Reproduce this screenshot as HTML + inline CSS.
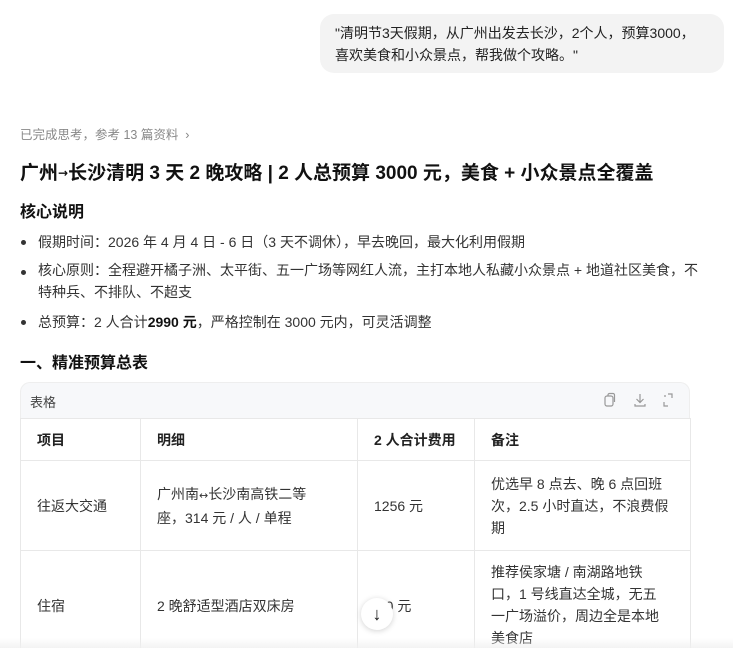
<!DOCTYPE html>
<html><head><meta charset="utf-8"><style>
*{margin:0;padding:0;box-sizing:border-box}
html,body{width:733px;height:648px;overflow:hidden}
body{background:#fff;font-family:"Liberation Sans","Noto Sans CJK SC",sans-serif;color:#1f1f1f;position:relative}
.a{position:absolute;white-space:nowrap}
.bubble{left:320px;top:14px;width:404px;height:59px;background:#f3f3f3;border-radius:14px;padding:8px 15px;font-size:14px;line-height:22px;color:#222}
.li{font-size:14px;color:#333;line-height:22px}
.dot{position:absolute;left:21px;width:5px;height:5px;border-radius:50%;background:#333}
table{position:absolute;left:20px;top:418px;width:670px;border-collapse:collapse;font-size:14px;color:#333;table-layout:fixed}
td{border:1px solid #e8e8e8;padding:0 16px;line-height:22px;vertical-align:middle;white-space:nowrap}
tr.h td{font-weight:bold;color:#222;height:42px}
</style></head><body>
<div class="a bubble">"清明节3天假期，从广州出发去长沙，2个人，预算3000，<br>喜欢美食和小众景点，帮我做个攻略。"</div>
<div class="a" style="left:20px;top:124px;font-size:12.5px;color:#888">已完成思考，参考 13 篇资料 &nbsp;›</div>
<div class="a" style="left:20px;top:158px;font-size:19px;font-weight:bold;color:#111">广州<span style="font-family:'DejaVu Sans';font-size:12px;vertical-align:2px">→</span>长沙清明 3 天 2 晚攻略 | 2 人总预算 3000 元，美食 + 小众景点全覆盖</div>
<div class="a" style="left:20px;top:198px;font-size:16px;font-weight:bold;color:#111">核心说明</div>
<div class="dot" style="top:240px"></div>
<div class="a li" style="left:38px;top:231px">假期时间：2026 年 4 月 4 日 - 6 日（3 天不调休），早去晚回，最大化利用假期</div>
<div class="dot" style="top:270px"></div>
<div class="a li" style="left:38px;top:259px">核心原则：全程避开橘子洲、太平街、五一广场等网红人流，主打本地人私藏小众景点 + 地道社区美食，不<br>特种兵、不排队、不超支</div>
<div class="dot" style="top:320px"></div>
<div class="a li" style="left:38px;top:311px">总预算：2 人合计<b style="color:#111">2990 元</b>，严格控制在 3000 元内，可灵活调整</div>
<div class="a" style="left:20px;top:349px;font-size:16px;font-weight:bold;color:#111">一、精准预算总表</div>
<div class="a" style="left:20px;top:382px;width:670px;height:37px;background:#f7f8fa;border-radius:10px 10px 0 0;border:1px solid #eee;border-bottom:none"></div>
<div class="a" style="left:30px;top:392px;font-size:13px;color:#444">表格</div>
<svg class="a" style="left:602px;top:392px" width="80" height="16" viewBox="0 0 80 16" fill="none" stroke="#999" stroke-width="1.2">
<rect x="3" y="4" width="8" height="10" rx="2"/><path d="M6 4V3a1.5 1.5 0 0 1 1.5-1.5H11a1.5 1.5 0 0 1 1.5 1.5v7"/>
<path d="M38 2v8M34.5 7l3.5 3.5L41.5 7M33 12v2h10v-2"/>
<path d="M62 4h2M66 2h4v4M66 14h-4v-4"/>
</svg>
<table>
<colgroup><col style="width:120px"><col style="width:217px"><col style="width:117px"><col style="width:216px"></colgroup>
<tr class="h"><td>项目</td><td>明细</td><td>2 人合计费用</td><td>备注</td></tr>
<tr style="height:90px"><td>往返大交通</td><td>广州南<span style="font-family:'DejaVu Sans';font-size:11px">↔</span>长沙南高铁二等<br>座，314 元 / 人 / 单程</td><td>1256 元</td><td>优选早 8 点去、晚 6 点回班<br>次，2.5 小时直达，不浪费假<br>期</td></tr>
<tr style="height:110px"><td>住宿</td><td>2 晚舒适型酒店双床房</td><td>&nbsp;&nbsp;&nbsp;0 元</td><td style="vertical-align:top;padding-top:10px">推荐侯家塘 / 南湖路地铁<br>口，1 号线直达全城，无五<br>一广场溢价，周边全是本地<br>美食店</td></tr>
</table>
<div class="a" style="left:361px;top:598px;width:32px;height:32px;border-radius:50%;background:#fff;box-shadow:0 1px 6px rgba(0,0,0,.18);text-align:center;line-height:32px;font-size:18px;font-weight:bold;color:#111">↓</div>
<div class="a" style="left:0;top:638px;width:733px;height:10px;background:linear-gradient(rgba(255,255,255,0),rgba(240,240,240,.8))"></div>
</body></html>
